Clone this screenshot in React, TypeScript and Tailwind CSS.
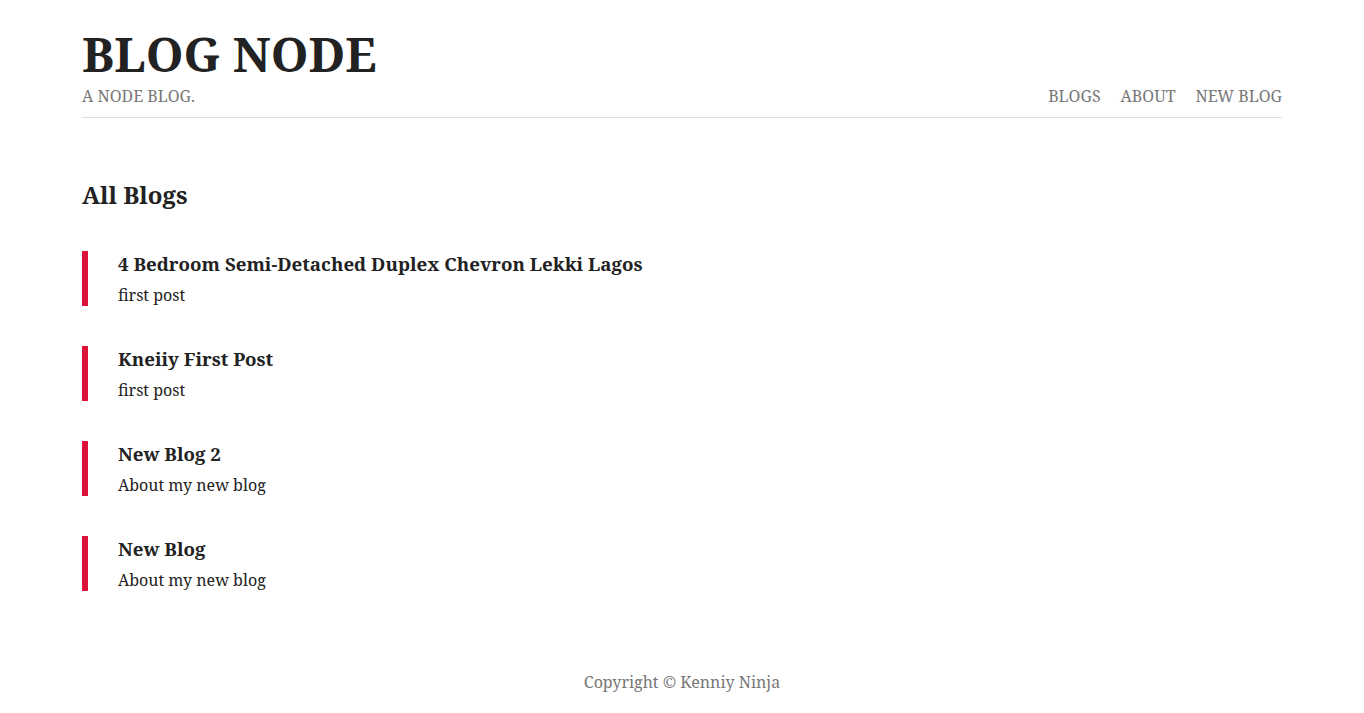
const blogs = [
  { title: "4 Bedroom Semi-Detached Duplex Chevron Lekki Lagos", snippet: "first post" },
  { title: "Kneiiy First Post", snippet: "first post" },
  { title: "New Blog 2", snippet: "About my new blog" },
  { title: "New Blog", snippet: "About my new blog" },
];

export default function App() {
  return (
    <div
      className="min-h-screen bg-white text-[#222]"
      style={{ fontFamily: '"Noto Serif", "DejaVu Serif", "Liberation Serif", serif' }}
    >
      <div className="mx-auto w-[1200px]">
        <nav className="flex items-end justify-between border-b border-[#ddd] pt-[26px] pb-[11px]">
          <div>
            <h1 className="text-[48px] font-bold leading-[56px] text-[#222]">BLOG NODE</h1>
            <p className="mt-[4px] text-[16px] leading-[20px] text-[#777]">A NODE BLOG.</p>
          </div>
          <ul className="flex gap-[20px] text-[16px] leading-[20px] text-[#777]">
            <li>BLOGS</li>
            <li>ABOUT</li>
            <li>NEW BLOG</li>
          </ul>
        </nav>

        <div className="pt-[59px]">
          <h2 className="text-[24px] font-bold leading-[36px]">All Blogs</h2>
          <div className="mt-[38px] flex flex-col gap-[40px]">
            {blogs.map((b) => (
              <div key={b.title} className="border-l-[6px] border-[crimson] pb-[1px] pl-[30px]">
                <h3 className="text-[18.72px] font-bold leading-[26px]">{b.title}</h3>
                <p className="mt-[8px] text-[16px] leading-[20px]">{b.snippet}</p>
              </div>
            ))}
          </div>
        </div>

        <footer className="pt-[79px] text-center text-[16px] leading-[24px] text-[#777]">
          Copyright © Kenniy Ninja
        </footer>
      </div>
    </div>
  );
}
